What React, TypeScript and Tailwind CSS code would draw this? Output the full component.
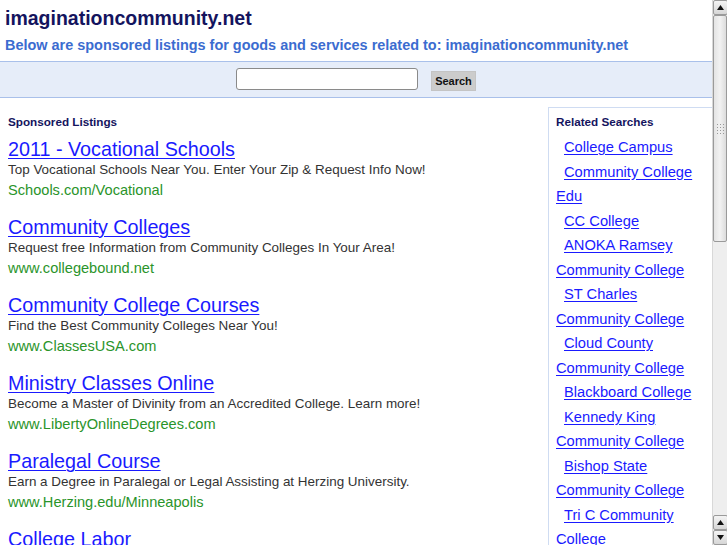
import React from "react";

const ads = [
  { t: "2011 - Vocational Schools", d: "Top Vocational Schools Near You. Enter Your Zip & Request Info Now!", u: "Schools.com/Vocational" },
  { t: "Community Colleges", d: "Request free Information from Community Colleges In Your Area!", u: "www.collegebound.net" },
  { t: "Community College Courses", d: "Find the Best Community Colleges Near You!", u: "www.ClassesUSA.com" },
  { t: "Ministry Classes Online", d: "Become a Master of Divinity from an Accredited College. Learn more!", u: "www.LibertyOnlineDegrees.com" },
  { t: "Paralegal Course", d: "Earn a Degree in Paralegal or Legal Assisting at Herzing University.", u: "www.Herzing.edu/Minneapolis" },
  { t: "College Labor", d: "Find College Labor Jobs Near You.", u: "www.example.com" },
];

const related = [
  "College Campus",
  "Community College Edu",
  "CC College",
  "ANOKA Ramsey Community College",
  "ST Charles Community College",
  "Cloud County Community College",
  "Blackboard College",
  "Kennedy King Community College",
  "Bishop State Community College",
  "Tri C Community College",
];

function Arrow({ up }: { up: boolean }) {
  return (
    <div className="h-[15px] w-[15px] shrink-0 flex items-center justify-center border border-[#9a9a9a] rounded-[2px] bg-gradient-to-b from-[#f4f4f4] to-[#d6d6d6]">
      <svg width="7" height="5" viewBox="0 0 7 5">
        {up ? <polygon points="3.5,0 7,5 0,5" fill="#111" /> : <polygon points="0,0 7,0 3.5,5" fill="#111" />}
      </svg>
    </div>
  );
}

export default function App() {
  const font = { fontFamily: '"Liberation Sans", Arial, sans-serif' };
  return (
    <div className="flex h-[545px] w-[727px] overflow-hidden bg-white" style={font}>
      <div className="flex-1 flex flex-col min-w-0">
        <div className="pl-[5px] pt-[6px]">
          <div className="text-[19.5px] leading-[24px] font-bold text-[#14145e]">imaginationcommunity.net</div>
          <div className="mt-[5px] text-[14.45px] leading-[20px] font-bold text-[#3b6cd0]">
            Below are sponsored listings for goods and services related to: imaginationcommunity.net
          </div>
        </div>
        <div className="mt-[6px] h-[37px] border-y border-[#a9c0ea] bg-[#e6edf9] flex justify-center items-start">
          <div className="mt-[6px] h-[22px] w-[182px] bg-white border border-[#8a8a8a] rounded-[3px]" />
          <div className="ml-[13px] mt-[9px] h-[20px] w-[45px] bg-[#cccccc] border border-[#c4c4c4] flex items-center justify-center text-[11px] font-bold text-[#111]">
            Search
          </div>
        </div>
        <div className="flex flex-1 min-h-0">
          <div className="flex-1 pl-[8px] pt-[16px]">
            <div className="text-[11.7px] leading-[16px] font-bold text-[#14145e]">Sponsored Listings</div>
            <div className="mt-[8px] flex flex-col">
              {ads.map((a) => (
                <div key={a.t} className="pb-[16px]">
                  <div className="text-[19.75px] leading-[22px] text-[#1a1aff] underline underline-offset-[2px] decoration-[1px] whitespace-nowrap">{a.t}</div>
                  <div className="text-[13.45px] leading-[20px] text-[#333] whitespace-nowrap">{a.d}</div>
                  <div className="text-[14.6px] leading-[20px] text-[#2a942a] whitespace-nowrap">{a.u}</div>
                </div>
              ))}
            </div>
          </div>
          <div className="w-[164px] shrink-0 mt-[9px] border-l border-t border-[#cfdcf2] pl-[7px] pt-[6px]">
            <div className="text-[11.7px] leading-[16px] font-bold text-[#14145e]">Related Searches</div>
            <div className="mt-[5px] pr-[8px]">
              {related.map((r, i) => (
                <div key={i} className="indent-[8px] text-[14.7px] leading-[24.5px]">
                  <span className="text-[#1a1aff] underline underline-offset-[2px]">{r}</span>
                </div>
              ))}
            </div>
          </div>
        </div>
      </div>
      <div className="w-[15px] shrink-0 flex flex-col bg-[#eeeeee] border-l border-[#d8d8d8]">
        <Arrow up />
        <div className="h-[227px] shrink-0 border border-[#9a9a9a] rounded-[2px] bg-gradient-to-r from-[#e4e4e4] via-[#f2f2f2] to-[#dcdcdc] flex items-center justify-center">
          <div className="grid grid-cols-3 gap-[2px]">
            {Array.from({ length: 12 }).map((_, i) => (
              <div key={i} className="w-[1px] h-[1px] bg-[#999]" />
            ))}
          </div>
        </div>
        <div className="flex-1" />
        <Arrow up />
        <Arrow up={false} />
      </div>
    </div>
  );
}
